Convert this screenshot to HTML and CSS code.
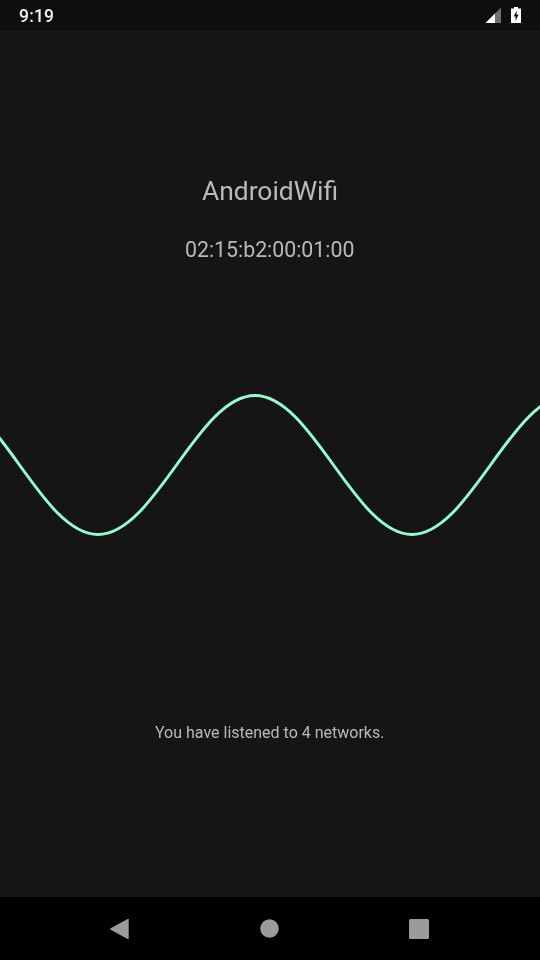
FILE: index.html
```html
<!DOCTYPE html>
<html lang="en">
<head>
<meta charset="utf-8">
<title>AndroidWifi</title>
<link rel="stylesheet" href="styles.css">
</head>
<body>
<div class="screen">
  <header class="status-bar">
    <span class="clock">9:19</span>
    <div class="status-icons">
      <svg class="signal" width="16" height="16" viewBox="0 0 16 16">
        <path d="M16 0.5V16H0.5Z" fill="#6e6e6e"/>
        <path d="M10 6.5V16H0.5Z" fill="#ffffff"/>
      </svg>
      <svg class="battery" width="10" height="16" viewBox="0 0 10 16">
        <path fill-rule="evenodd" fill="#ffffff" d="M3 0H7V1.5H10V16H0V1.5H3ZM5.8 3.5L2.6 9.5H4.6V14L7.6 7.6H5.4Z"/>
      </svg>
    </div>
  </header>
  <main class="content">
    <h1 class="title">AndroidWifi</h1>
    <p class="mac">02:15:b2:00:01:00</p>
    <svg class="wave" width="540" height="170" viewBox="0 380 540 170">
      <path d="M-59 394.5C-1.8 394.5 40.8 533.5 98 533.5C155.2 533.5 197.8 394.5 255 394.5C312.2 394.5 354.8 533.5 412 533.5C469.2 533.5 511.8 394.5 569 394.5" fill="none" stroke="#96fbcc" stroke-width="3"/>
    </svg>
    <p class="count">You have listened to 4 networks.</p>
  </main>
  <nav class="nav-bar">
    <svg width="20" height="22" viewBox="0 0 20 22"><path d="M18.7 1.5V20.5Q18.7 21.5 17.7 21L.6 11.8Q-.2 11 .6 10.2L17.7 1Q18.7 .5 18.7 1.5Z" fill="#9b9b9b"/></svg>
    <svg width="19" height="19" viewBox="0 0 19 19"><circle cx="9.5" cy="9.5" r="9.3" fill="#9b9b9b"/></svg>
    <svg width="20" height="20" viewBox="0 0 20 20"><rect width="20" height="20" rx="1.5" fill="#9b9b9b"/></svg>
  </nav>
</div>
</body>
</html>
```
FILE: styles.css
```css
* {
  box-sizing: border-box;
  margin: 0;
  padding: 0;
}

html, body {
  width: 540px;
  height: 960px;
  overflow: hidden;
  background: #151515;
}

.screen {
  width: 540px;
  height: 960px;
  display: flex;
  flex-direction: column;
  font-family: Roboto, sans-serif;
  color: #bababa;
}

.status-bar {
  height: 30px;
  flex: none;
  background: #0e0e0e;
  display: flex;
  align-items: center;
  justify-content: space-between;
  padding: 0 19px 0 19px;
}

.clock {
  color: #f2f2f2;
  font-size: 17.5px;
  line-height: 20px;
  font-weight: 500;
  letter-spacing: 0.2px;
  padding-top: 2px;
  will-change: transform;
}

.status-icons {
  display: flex;
  align-items: center;
  gap: 10px;
}

.signal, .battery {
  display: block;
}

.content {
  flex: 1;
  display: flex;
  flex-direction: column;
  align-items: center;
  padding-top: 145px;
}

.title {
  font-size: 26.4px;
  line-height: 32px;
  font-weight: 400;
  will-change: transform;
}

.mac {
  font-size: 21.3px;
  line-height: 28px;
  margin-top: 29px;
  will-change: transform;
}

.wave {
  display: block;
  margin-top: 117px;
}

.count {
  font-size: 16px;
  line-height: 22px;
  margin-top: 171px;
  will-change: transform;
}

.nav-bar {
  height: 63px;
  flex: none;
  background: #000000;
  display: flex;
  align-items: center;
  gap: 130px;
  padding-left: 110px;
}
```
